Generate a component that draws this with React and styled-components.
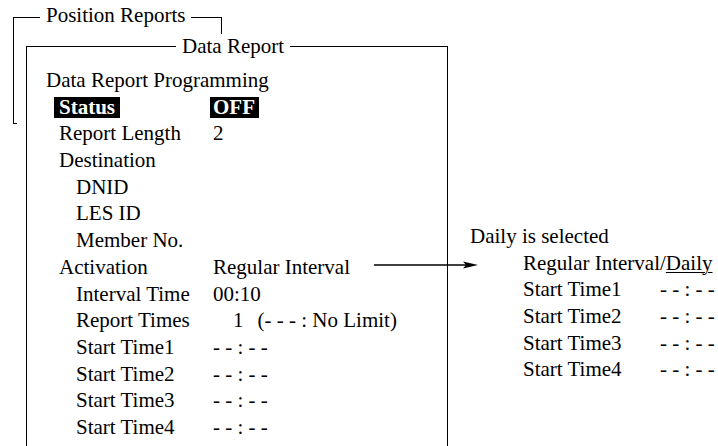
import React from 'react'
import styled, { createGlobalStyle } from 'styled-components'

const GlobalStyle = createGlobalStyle`
  html, body {
    margin: 0;
    padding: 0;
    background: #fff;
    overflow: hidden;
  }
  body {
    font-family: "Liberation Serif", "Times New Roman", serif;
    font-size: 21px;
    color: #000;
  }
`

const LINE = '1.5px solid #000'
const ROW = 26.7

const Page = styled.div`
  display: flex;
  align-items: flex-start;
  width: 718px;
  height: 446px;
  overflow: hidden;
`

// both menu frames share one grid cell, the front one covers the back one
const Stack = styled.div`
  display: grid;
  flex: none;
`

const Frame = styled.div`
  grid-area: 1 / 1;
  align-self: start;
  justify-self: start;
  display: flex;
  flex-direction: column;
  box-sizing: border-box;
  margin: ${p => p.$top}px 0 0 ${p => p.$left}px;
  padding-left: ${p => p.$halo || 0}px;
  width: ${p => p.$width}px;
  background: ${p => (p.$halo ? '#fff' : 'transparent')};
`

const TopEdge = styled.div`
  display: flex;
  height: 24px;
`

const Edge = styled.div`
  box-sizing: border-box;
  margin-top: 12px;
  border-top: ${LINE};
  border-left: ${p => (p.$side === 'left' ? LINE : 'none')};
  border-right: ${p => (p.$side === 'right' ? LINE : 'none')};
  width: ${p => (p.$width ? `${p.$width}px` : 'auto')};
  flex: ${p => (p.$width ? 'none' : '1')};
`

const Caption = styled.div`
  padding: 0 6px;
  line-height: 24px;
  white-space: nowrap;
  margin-top: ${p => (p.$lift ? -p.$lift : 0)}px;
`

const BackBody = styled.div`
  height: 94px;
  border-left: ${LINE};
  border-right: ${LINE};
  border-bottom: ${LINE};
`

const Body = styled.div`
  padding: 9px 0 40px 19px;
  border-left: ${LINE};
  border-right: ${LINE};
`

const Row = styled.div`
  display: flex;
  align-items: center;
  height: ${ROW}px;
  line-height: ${ROW}px;
  padding-left: ${p => p.$indent || 0}px;
  white-space: nowrap;
`

const Label = styled.span`
  flex: none;
  width: ${p => 167 - (p.$indent || 0)}px;
`

const Value = styled.span`
  flex: none;
  width: ${p => (p.$width ? `${p.$width}px` : 'auto')};
  padding-left: ${p => p.$shift || 0}px;
`

const Note = styled.span`
  margin-left: 14px;
`

const Highlight = styled.span`
  display: inline-block;
  background: #000;
  color: #fff;
  font-weight: bold;
  line-height: 21px;
  padding: 0 ${p => p.$pad}px;
  margin-left: -${p => p.$pad}px;
`

const Arrow = styled.svg`
  flex: none;
  margin-bottom: 4px;
  overflow: visible;
`

const Side = styled.div`
  flex: none;
  margin-left: 22px;
  padding-top: 223px;
`

const SideRow = styled.div`
  display: flex;
  height: ${ROW}px;
  line-height: ${ROW}px;
  padding-left: ${p => p.$indent || 0}px;
  white-space: nowrap;
`

const SideLabel = styled.span`
  flex: none;
  width: 137px;
`

const Underlined = styled.span`
  text-decoration: underline;
  text-decoration-thickness: 1px;
  text-underline-offset: 2px;
`

const EMPTY = '- - : - -'

const startTimes = ['Start Time1', 'Start Time2', 'Start Time3', 'Start Time4']

const App = () => {
  return (
    <Page>
      <GlobalStyle />
      <Stack>
        <Frame $top={5} $left={13} $width={209}>
          <TopEdge>
            <Edge $side="left" $width={27} />
            <Caption $lift={2}>Position Reports</Caption>
            <Edge $side="right" />
          </TopEdge>
          <BackBody />
        </Frame>

        <Frame $top={34} $left={17} $halo={9} $width={431}>
          <TopEdge>
            <Edge $side="left" $width={150} />
            <Caption>Data Report</Caption>
            <Edge $side="right" />
          </TopEdge>
          <Body>
            <Row>Data Report Programming</Row>
            <Row $indent={13}>
              <Label $indent={13}><Highlight $pad={5}>Status</Highlight></Label>
              <Value><Highlight $pad={3.5}>OFF</Highlight></Value>
            </Row>
            <Row $indent={13}>
              <Label $indent={13}>Report Length</Label>
              <Value>2</Value>
            </Row>
            <Row $indent={13}>Destination</Row>
            <Row $indent={30}>DNID</Row>
            <Row $indent={30}>LES ID</Row>
            <Row $indent={30}>Member No.</Row>
            <Row $indent={13}>
              <Label $indent={13}>Activation</Label>
              <Value $width={161}>Regular Interval</Value>
              <Arrow width="104" height="12" viewBox="0 0 104 12">
                <line x1="0" y1="6" x2="92" y2="6" stroke="#000" strokeWidth="1.3" />
                <polygon points="104,6 89,2.5 92,6 89,9.5" fill="#000" />
              </Arrow>
            </Row>
            <Row $indent={30}>
              <Label $indent={30}>Interval Time</Label>
              <Value>00:10</Value>
            </Row>
            <Row $indent={30}>
              <Label $indent={30}>Report Times</Label>
              <Value $shift={20}>1<Note>(- - - : No Limit)</Note></Value>
            </Row>
            {startTimes.map(t => (
              <Row $indent={30} key={t}>
                <Label $indent={30}>{t}</Label>
                <Value>{EMPTY}</Value>
              </Row>
            ))}
          </Body>
        </Frame>
      </Stack>

      <Side>
        <SideRow>Daily is selected</SideRow>
        <SideRow $indent={53}>
          Regular Interval/<Underlined>Daily</Underlined>
        </SideRow>
        {startTimes.map(t => (
          <SideRow $indent={53} key={t}>
            <SideLabel>{t}</SideLabel>
            <span>{EMPTY}</span>
          </SideRow>
        ))}
      </Side>
    </Page>
  )
}

export default App
